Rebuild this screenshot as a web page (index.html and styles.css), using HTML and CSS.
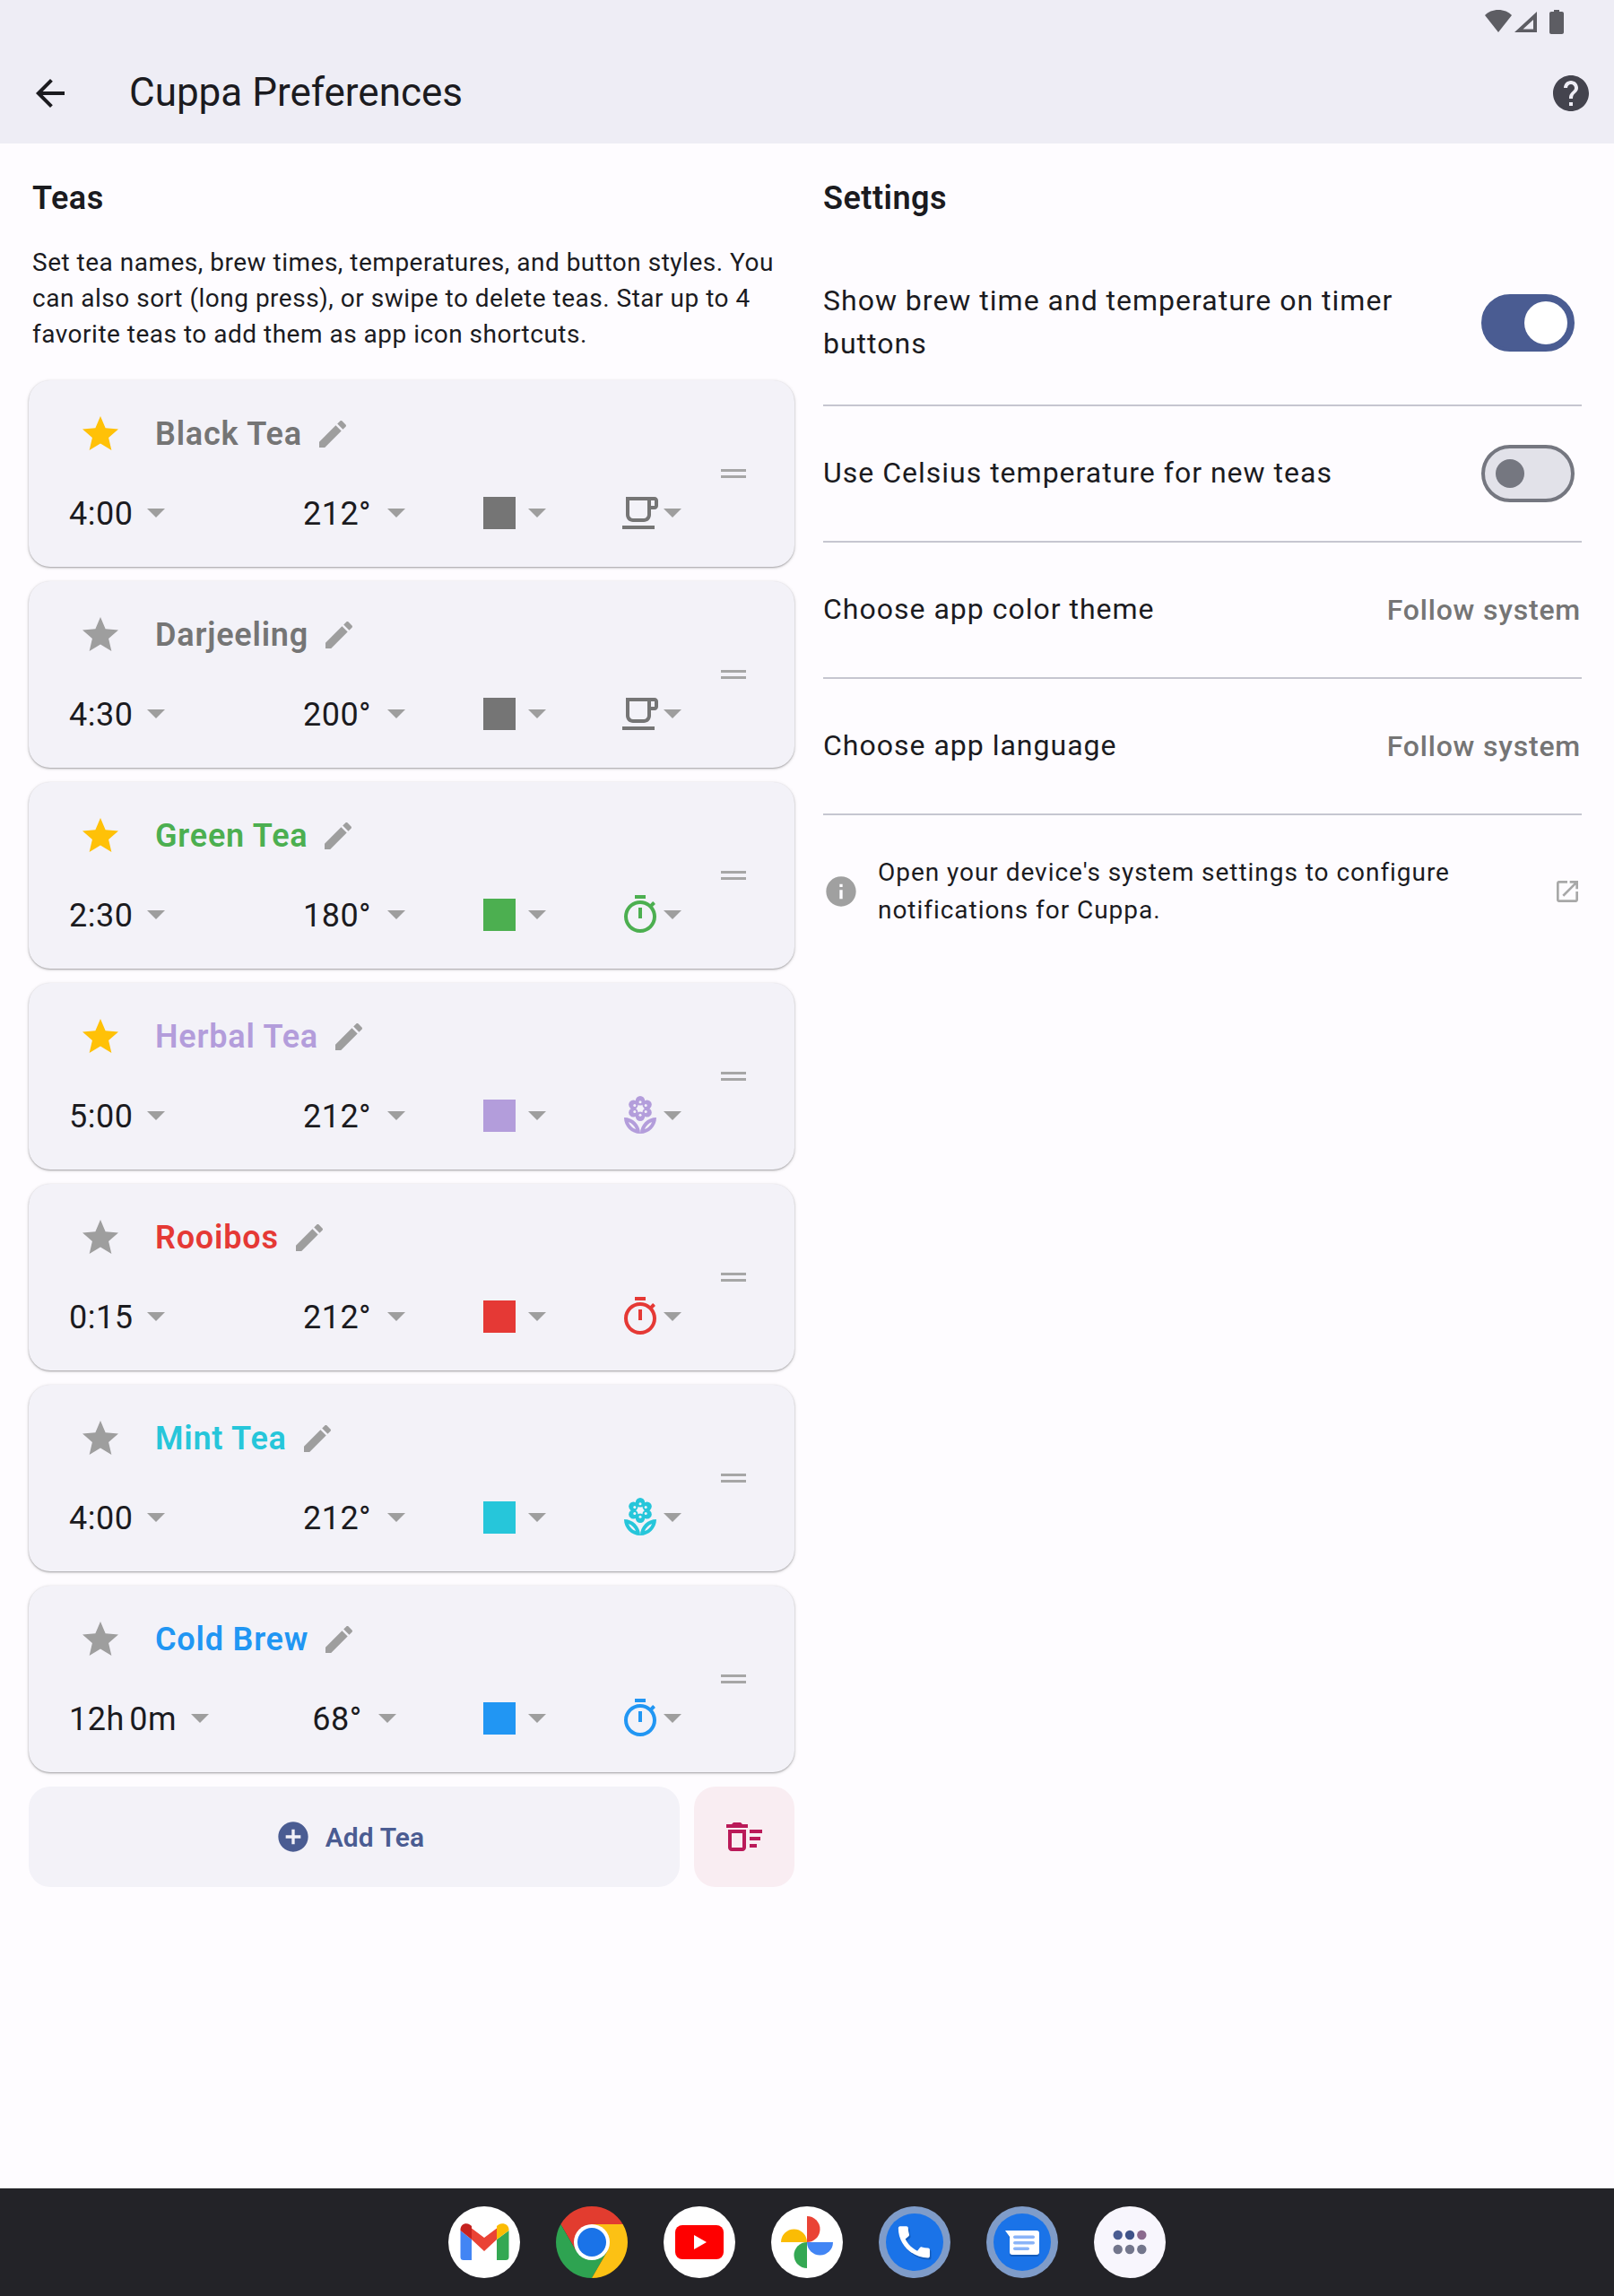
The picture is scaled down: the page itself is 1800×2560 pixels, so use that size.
FILE: index.html
```html
<!DOCTYPE html>
<html lang="en">
<head>
    <meta charset="UTF-8">
    <meta name="viewport" content="width=device-width, initial-scale=1.0">
    <title>Cuppa Preferences</title>
    <link rel="stylesheet" href="styles.css">
</head>
<body>
    <!-- Shared icons -->
    <svg class="icon-defs">
        <symbol id="i-star" viewBox="0 0 24 24"><path d="M12 17.27 18.18 21l-1.64-7.03L22 9.24l-7.19-.61L12 2 9.19 8.63 2 9.24l5.46 4.73L5.82 21z"/></symbol>
        <symbol id="i-edit" viewBox="0 0 24 24"><path d="M3 17.25V21h3.75L17.81 9.94l-3.75-3.75L3 17.25zM20.71 7.04c.39-.39.39-1.02 0-1.41l-2.34-2.34c-.39-.39-1.02-.39-1.41 0l-1.83 1.83 3.75 3.75 1.83-1.83z"/></symbol>
        <symbol id="i-drop" viewBox="0 0 20 10"><path d="M0 0h20L10 10z"/></symbol>
        <symbol id="i-cup" viewBox="0 0 24 24"><path d="M20 3H4v10c0 2.21 1.79 4 4 4h6c2.21 0 4-1.79 4-4v-3h2c1.11 0 2-.89 2-2V5c0-1.11-.89-2-2-2zm-4 10c0 1.1-.9 2-2 2H8c-1.1 0-2-.9-2-2V5h10v8zm4-5h-2V5h2v3zM2 19h18v2H2z"/></symbol>
        <symbol id="i-timer" viewBox="0 0 24 24"><path d="M15 1H9v2h6V1zm-4 13h2V8h-2v6zm8.03-6.61 1.42-1.42c-.43-.51-.9-.99-1.41-1.41l-1.42 1.42C16.07 4.74 14.12 4 12 4c-4.97 0-9 4.03-9 9s4.02 9 9 9 9-4.03 9-9c0-2.12-.74-4.07-1.97-5.61zM12 20c-3.87 0-7-3.13-7-7s3.13-7 7-7 7 3.13 7 7-3.13 7-7 7z"/></symbol>
        <symbol id="i-flower" viewBox="0 0 24 24">
            <path d="M12 22c4.97 0 9-4.03 9-9-4.97 0-9 4.03-9 9zm2.44-2.44c.71-1.9 2.22-3.42 4.12-4.12-.71 1.9-2.22 3.41-4.12 4.12zM3 13c0 4.97 4.03 9 9 9 0-4.97-4.03-9-9-9zm2.44 2.44c1.9.71 3.42 2.22 4.12 4.12-1.9-.71-3.41-2.22-4.12-4.12z"/>
            <circle cx="12" cy="3.6" r="2.6"/><circle cx="12" cy="12.4" r="2.6"/>
            <circle cx="8.2" cy="5.8" r="2.6"/><circle cx="15.8" cy="5.8" r="2.6"/>
            <circle cx="8.2" cy="10.2" r="2.6"/><circle cx="15.8" cy="10.2" r="2.6"/>
            <g fill="#f3f2f8">
                <circle cx="12" cy="4.4" r=".75"/><circle cx="12" cy="11.6" r=".75"/>
                <circle cx="8.9" cy="6.2" r=".75"/><circle cx="15.1" cy="6.2" r=".75"/>
                <circle cx="8.9" cy="9.8" r=".75"/><circle cx="15.1" cy="9.8" r=".75"/>
            </g>
        </symbol>
    </svg>

    <!-- App bar -->
    <header class="appbar">
        <div class="status-bar">
            <svg class="status-wifi" viewBox="0 0 30 25"><path d="M0 6C3.500 2.200 9 0 15 0s11.500 2.200 15 6L15 25z"/></svg>
            <svg class="status-signal" viewBox="0 0 25 23"><path d="M25 0v23H0zM21 9 9.500 19.500H21z" fill-rule="evenodd"/></svg>
            <svg class="status-battery" viewBox="0 0 16 27"><path d="M5 0h6v2h3c1.100 0 2 .9 2 2v21c0 1.100-.9 2-2 2H2c-1.100 0-2-.9-2-2V4c0-1.100.9-2 2-2h3z"/></svg>
        </div>
        <div class="toolbar">
            <svg class="icon-48 back-icon" viewBox="0 0 24 24"><path d="M20 11H7.830l5.590-5.590L12 4l-8 8 8 8 1.410-1.410L7.830 13H20z"/></svg>
            <h1 class="page-title">Cuppa Preferences</h1>
            <svg class="icon-48 help-icon" viewBox="0 0 24 24"><path d="M12 2C6.480 2 2 6.480 2 12s4.480 10 10 10 10-4.480 10-10S17.520 2 12 2zm1 17h-2v-2h2v2zm2.070-7.750-.9.920C13.450 12.900 13 13.500 13 15h-2v-.5c0-1.100.45-2.100 1.170-2.830l1.240-1.260c.37-.36.59-.86.59-1.410 0-1.100-.9-2-2-2s-2 .9-2 2H8c0-2.210 1.790-4 4-4s4 1.790 4 4c0 .88-.36 1.680-.93 2.250z"/></svg>
        </div>
    </header>

    <main class="content">
        <!-- Teas column -->
        <section class="teas">
            <h2 class="section-title">Teas</h2>
            <p class="teas-intro">Set tea names, brew times, temperatures, and button styles. You can also sort (long press), or swipe to delete teas. Star up to 4 favorite teas to add them as app icon shortcuts.</p>

            <div class="tea-list">
                <div class="tea-card tea-grey">
                    <div class="tea-main">
                        <div class="tea-head">
                            <svg class="icon-48 star star-on"><use href="#i-star"/></svg>
                            <span class="tea-name">Black Tea</span>
                            <svg class="edit-icon"><use href="#i-edit"/></svg>
                        </div>
                        <div class="tea-controls">
                            <div class="pick"><span>4:00</span><svg class="drop"><use href="#i-drop"/></svg></div>
                            <div class="pick pick-temp"><span>212°</span><svg class="drop"><use href="#i-drop"/></svg></div>
                            <div class="pick pick-color"><div class="swatch"></div><svg class="drop"><use href="#i-drop"/></svg></div>
                            <div class="pick pick-style"><svg class="icon-48 style-icon"><use href="#i-cup"/></svg><svg class="drop"><use href="#i-drop"/></svg></div>
                        </div>
                    </div>
                    <div class="drag-handle"></div>
                </div>

                <div class="tea-card tea-grey">
                    <div class="tea-main">
                        <div class="tea-head">
                            <svg class="icon-48 star"><use href="#i-star"/></svg>
                            <span class="tea-name">Darjeeling</span>
                            <svg class="edit-icon"><use href="#i-edit"/></svg>
                        </div>
                        <div class="tea-controls">
                            <div class="pick"><span>4:30</span><svg class="drop"><use href="#i-drop"/></svg></div>
                            <div class="pick pick-temp"><span>200°</span><svg class="drop"><use href="#i-drop"/></svg></div>
                            <div class="pick pick-color"><div class="swatch"></div><svg class="drop"><use href="#i-drop"/></svg></div>
                            <div class="pick pick-style"><svg class="icon-48 style-icon"><use href="#i-cup"/></svg><svg class="drop"><use href="#i-drop"/></svg></div>
                        </div>
                    </div>
                    <div class="drag-handle"></div>
                </div>

                <div class="tea-card tea-green">
                    <div class="tea-main">
                        <div class="tea-head">
                            <svg class="icon-48 star star-on"><use href="#i-star"/></svg>
                            <span class="tea-name">Green Tea</span>
                            <svg class="edit-icon"><use href="#i-edit"/></svg>
                        </div>
                        <div class="tea-controls">
                            <div class="pick"><span>2:30</span><svg class="drop"><use href="#i-drop"/></svg></div>
                            <div class="pick pick-temp"><span>180°</span><svg class="drop"><use href="#i-drop"/></svg></div>
                            <div class="pick pick-color"><div class="swatch"></div><svg class="drop"><use href="#i-drop"/></svg></div>
                            <div class="pick pick-style"><svg class="icon-48 style-icon"><use href="#i-timer"/></svg><svg class="drop"><use href="#i-drop"/></svg></div>
                        </div>
                    </div>
                    <div class="drag-handle"></div>
                </div>

                <div class="tea-card tea-purple">
                    <div class="tea-main">
                        <div class="tea-head">
                            <svg class="icon-48 star star-on"><use href="#i-star"/></svg>
                            <span class="tea-name">Herbal Tea</span>
                            <svg class="edit-icon"><use href="#i-edit"/></svg>
                        </div>
                        <div class="tea-controls">
                            <div class="pick"><span>5:00</span><svg class="drop"><use href="#i-drop"/></svg></div>
                            <div class="pick pick-temp"><span>212°</span><svg class="drop"><use href="#i-drop"/></svg></div>
                            <div class="pick pick-color"><div class="swatch"></div><svg class="drop"><use href="#i-drop"/></svg></div>
                            <div class="pick pick-style"><svg class="icon-48 style-icon"><use href="#i-flower"/></svg><svg class="drop"><use href="#i-drop"/></svg></div>
                        </div>
                    </div>
                    <div class="drag-handle"></div>
                </div>

                <div class="tea-card tea-red">
                    <div class="tea-main">
                        <div class="tea-head">
                            <svg class="icon-48 star"><use href="#i-star"/></svg>
                            <span class="tea-name">Rooibos</span>
                            <svg class="edit-icon"><use href="#i-edit"/></svg>
                        </div>
                        <div class="tea-controls">
                            <div class="pick"><span>0:15</span><svg class="drop"><use href="#i-drop"/></svg></div>
                            <div class="pick pick-temp"><span>212°</span><svg class="drop"><use href="#i-drop"/></svg></div>
                            <div class="pick pick-color"><div class="swatch"></div><svg class="drop"><use href="#i-drop"/></svg></div>
                            <div class="pick pick-style"><svg class="icon-48 style-icon"><use href="#i-timer"/></svg><svg class="drop"><use href="#i-drop"/></svg></div>
                        </div>
                    </div>
                    <div class="drag-handle"></div>
                </div>

                <div class="tea-card tea-cyan">
                    <div class="tea-main">
                        <div class="tea-head">
                            <svg class="icon-48 star"><use href="#i-star"/></svg>
                            <span class="tea-name">Mint Tea</span>
                            <svg class="edit-icon"><use href="#i-edit"/></svg>
                        </div>
                        <div class="tea-controls">
                            <div class="pick"><span>4:00</span><svg class="drop"><use href="#i-drop"/></svg></div>
                            <div class="pick pick-temp"><span>212°</span><svg class="drop"><use href="#i-drop"/></svg></div>
                            <div class="pick pick-color"><div class="swatch"></div><svg class="drop"><use href="#i-drop"/></svg></div>
                            <div class="pick pick-style"><svg class="icon-48 style-icon"><use href="#i-flower"/></svg><svg class="drop"><use href="#i-drop"/></svg></div>
                        </div>
                    </div>
                    <div class="drag-handle"></div>
                </div>

                <div class="tea-card tea-blue">
                    <div class="tea-main">
                        <div class="tea-head">
                            <svg class="icon-48 star"><use href="#i-star"/></svg>
                            <span class="tea-name">Cold Brew</span>
                            <svg class="edit-icon"><use href="#i-edit"/></svg>
                        </div>
                        <div class="tea-controls">
                            <div class="pick"><span>12h 0m</span><svg class="drop"><use href="#i-drop"/></svg></div>
                            <div class="pick pick-temp"><span>68°</span><svg class="drop"><use href="#i-drop"/></svg></div>
                            <div class="pick pick-color"><div class="swatch"></div><svg class="drop"><use href="#i-drop"/></svg></div>
                            <div class="pick pick-style"><svg class="icon-48 style-icon"><use href="#i-timer"/></svg><svg class="drop"><use href="#i-drop"/></svg></div>
                        </div>
                    </div>
                    <div class="drag-handle"></div>
                </div>
            </div>

            <div class="tea-actions">
                <div class="add-button">
                    <svg class="add-icon" viewBox="0 0 24 24"><path d="M12 2C6.480 2 2 6.480 2 12s4.480 10 10 10 10-4.480 10-10S17.520 2 12 2zm5 11h-4v4h-2v-4H7v-2h4V7h2v4h4v2z"/></svg>
                    <span>Add Tea</span>
                </div>
                <div class="delete-button">
                    <svg class="icon-48" viewBox="0 0 24 24"><path d="M15 16h4v2h-4zm0-8h7v2h-7zm0 4h6v2h-6zM3 18c0 1.100.9 2 2 2h6c1.100 0 2-.9 2-2V8H3v10zm2-8h6v8H5v-8zm5-6H6L5 5H2v2h12V5h-3z"/></svg>
                </div>
            </div>
        </section>

        <!-- Settings column -->
        <section class="settings">
            <h2 class="section-title">Settings</h2>
            <div class="settings-list">
                <div class="setting-row setting-tall">
                    <span class="setting-label setting-wrap">Show brew time and temperature on timer buttons</span>
                    <div class="toggle toggle-on"><span class="thumb"></span></div>
                </div>
                <div class="setting-row">
                    <span class="setting-label">Use Celsius temperature for new teas</span>
                    <div class="toggle"><span class="thumb"></span></div>
                </div>
                <div class="setting-row setting-choice">
                    <span class="setting-label">Choose app color theme</span>
                    <span class="setting-value">Follow system</span>
                </div>
                <div class="setting-row setting-choice">
                    <span class="setting-label">Choose app language</span>
                    <span class="setting-value">Follow system</span>
                </div>
            </div>
            <div class="notify-row">
                <svg class="info-icon" viewBox="0 0 24 24"><path d="M12 2C6.480 2 2 6.480 2 12s4.480 10 10 10 10-4.480 10-10S17.520 2 12 2zm1 15h-2v-6h2v6zm0-8h-2V7h2v2z"/></svg>
                <p class="notify-text">Open your device's system settings to configure notifications for Cuppa.</p>
                <svg class="open-icon" viewBox="0 0 24 24"><path d="M19 19H5V5h7V3H5c-1.110 0-2 .9-2 2v14c0 1.100.89 2 2 2h14c1.100 0 2-.9 2-2v-7h-2v7zM14 3v2h3.590l-9.830 9.830 1.410 1.410L19 6.410V10h2V3h-7z"/></svg>
            </div>
        </section>
    </main>

    <!-- Launcher dock -->
    <footer class="dock">
        <svg class="dock-app" viewBox="0 0 80 80">
            <circle cx="40" cy="40" r="40" fill="#fff"/>
            <path d="M13.500 27v29.500a3.500 3.500 0 0 0 3.500 3.500h9V37z" fill="#4285f4"/>
            <path d="M54 37v23h10a3.500 3.500 0 0 0 3.500-3.500V27z" fill="#34a853"/>
            <path d="M26 24.500 40 35l14-10.500V37L40 50 26 37z" fill="#ea4335"/>
            <path d="M13.500 27v-1c0-6 6-8.500 10.500-5.500l2 1.500v15z" fill="#c5221f"/>
            <path d="M54 37V22l2-1.500c4.500-3 11.500-.5 11.500 5.500v1z" fill="#fbbc04"/>
        </svg>
        <svg class="dock-app" viewBox="0 0 80 80">
            <path d="M40 20h34.640A40 40 0 0 0 5.360 20L22.680 50z" fill="#e23c2f"/>
            <path d="M5.360 20A40 40 0 0 0 40 80l17.320-30H22.680z" fill="#2ea351"/>
            <path d="M74.640 20H40l17.320 30L40 80A40 40 0 0 0 74.640 20z" fill="#fcc114"/>
            <circle cx="40" cy="40" r="20" fill="#fff"/>
            <circle cx="40" cy="40" r="16" fill="#1a73e8"/>
        </svg>
        <svg class="dock-app" viewBox="0 0 80 80">
            <circle cx="40" cy="40" r="40" fill="#fff"/>
            <rect x="13" y="21" width="54" height="38" rx="8" fill="#f00"/>
            <path d="M34 32l14 8-14 8z" fill="#fff"/>
        </svg>
        <svg class="dock-app" viewBox="0 0 80 80">
            <circle cx="40" cy="40" r="40" fill="#fff"/>
            <path d="M40 11a14.500 14.500 0 0 1 0 29z" fill="#ea4335"/>
            <path d="M11 40a14.500 14.500 0 0 1 29 0z" fill="#fbbc04"/>
            <path d="M40 69a14.500 14.500 0 0 1 0-29z" fill="#34a853"/>
            <path d="M69 40a14.500 14.500 0 0 1-29 0z" fill="#4285f4"/>
        </svg>
        <svg class="dock-app" viewBox="0 0 80 80">
            <circle cx="40" cy="40" r="40" fill="#7f9cc9"/>
            <circle cx="40" cy="40" r="32" fill="#1a73e8"/>
            <path transform="translate(17.500 18.500) scale(1.950)" d="M20.010 15.380c-1.230 0-2.420-.2-3.530-.56-.35-.12-.74-.03-1.010.24l-1.570 1.970c-2.830-1.350-5.480-3.900-6.890-6.830l1.950-1.660c.27-.28.35-.67.24-1.020-.37-1.110-.56-2.300-.56-3.530 0-.54-.45-.99-.99-.99H4.190C3.650 3 3 3.240 3 3.990 3 13.280 10.730 21 20.010 21c.71 0 .99-.63.99-1.180v-3.450c0-.54-.45-.99-.99-.99z" fill="#135cbc"/>
            <path transform="translate(16 16.500) scale(1.950)" d="M20.010 15.380c-1.230 0-2.420-.2-3.530-.56-.35-.12-.74-.03-1.010.24l-1.570 1.970c-2.830-1.350-5.480-3.900-6.890-6.830l1.950-1.660c.27-.28.35-.67.24-1.020-.37-1.110-.56-2.300-.56-3.530 0-.54-.45-.99-.99-.99H4.190C3.650 3 3 3.240 3 3.990 3 13.280 10.730 21 20.010 21c.71 0 .99-.63.99-1.180v-3.450c0-.54-.45-.99-.99-.99z" fill="#fff"/>
        </svg>
        <svg class="dock-app" viewBox="0 0 80 80">
            <circle cx="40" cy="40" r="40" fill="#7f9cc9"/>
            <circle cx="40" cy="40" r="32" fill="#1a73e8"/>
            <path d="M23 29h33a3 3 0 0 1 3 3v21a3 3 0 0 1-3 3H29a3 3 0 0 1-3-3V36z" fill="#135cbc"/>
            <path d="M21 27h35a3 3 0 0 1 3 3v21a3 3 0 0 1-3 3H29a3 3 0 0 1-3-3V34z" fill="#fff"/>
            <g fill="#8ab4f8">
                <rect x="30" y="32.500" width="24" height="3.500" rx="1.700"/>
                <rect x="30" y="39" width="24" height="3.500" rx="1.700"/>
                <rect x="30" y="45.500" width="18" height="3.500" rx="1.700"/>
            </g>
        </svg>
        <svg class="dock-app" viewBox="0 0 80 80">
            <circle cx="40" cy="40" r="40" fill="#f8f6fd"/>
            <circle cx="26.700" cy="32" r="5.200" fill="#4a5c92"/>
            <circle cx="40" cy="32" r="5.200" fill="#3f5389"/>
            <circle cx="53.300" cy="32" r="5.200" fill="#8b6a8e"/>
            <circle cx="26.700" cy="48" r="5.200" fill="#73768c"/>
            <circle cx="40" cy="48" r="5.200" fill="#73768c"/>
            <circle cx="53.300" cy="48" r="5.200" fill="#73768c"/>
        </svg>
    </footer>
</body>
</html>
```

FILE: styles.css
```css
/* Basic Reset */
* {
    box-sizing: border-box;
}

body, h1, h2, p {
    margin: 0;
    padding: 0;
}

body {
    display: flex;
    flex-direction: column;
    min-height: 100vh;
    background-color: #fefcff;
    color: #1b1b1f;
    font-family: Roboto, 'Liberation Sans', sans-serif;
}

svg {
    display: block;
    fill: currentColor;
    flex: none;
}

.icon-defs {
    display: none;
}

.icon-48 {
    width: 48px;
    height: 48px;
}

/* App bar */
.appbar {
    height: 160px;
    background-color: #eeedf5;
}

.status-bar {
    display: flex;
    align-items: center;
    height: 48px;
    padding: 0 56px 0 0;
    justify-content: flex-end;
    color: #5d5d63;
}

.status-wifi {
    width: 30px;
    height: 25px;
    margin-top: -1px;
}

.status-signal {
    width: 25px;
    height: 23px;
    margin-left: 3px;
}

.status-battery {
    width: 16px;
    height: 27px;
    margin-left: 14px;
}

.toolbar {
    display: flex;
    align-items: center;
    height: 112px;
    padding: 0 24px 0 32px;
}

.page-title {
    flex: 1;
    margin-left: 64px;
    margin-top: -2px;
    font-size: 44px;
    font-weight: 400;
    line-height: 56px;
}

.help-icon {
    color: #44444e;
}

/* Two columns */
.content {
    flex: 1;
    display: grid;
    grid-template-columns: 854px 846px;
    column-gap: 32px;
    padding: 37px 36px 0 32px;
}

.section-title {
    font-size: 36px;
    font-weight: 600;
    line-height: 48px;
    letter-spacing: 0.5px;
}

/* Teas */
.teas > .section-title {
    padding-left: 4px;
}

.teas-intro {
    margin: 28px 0 31px;
    padding-left: 4px;
    font-size: 28px;
    line-height: 40px;
    letter-spacing: 0.5px;
}

.tea-list {
    display: flex;
    flex-direction: column;
    gap: 16px;
}

.tea-card {
    display: flex;
    align-items: center;
    height: 208px;
    background-color: #f3f2f8;
    border-radius: 24px;
    box-shadow: 0 1px 2px rgba(0, 0, 0, 0.3), 0 1px 4px rgba(0, 0, 0, 0.12);
}

.tea-grey { --tea: #757575; }
.tea-green { --tea: #4caf50; }
.tea-purple { --tea: #b39ddb; }
.tea-red { --tea: #e53935; }
.tea-cyan { --tea: #26c6da; }
.tea-blue { --tea: #2196f3; }

.tea-main {
    flex: 1;
}

.tea-head {
    display: flex;
    align-items: center;
    height: 48px;
    padding-left: 56px;
}

.star {
    margin-right: 37px;
    color: #9e9e9e;
}

.star-on {
    color: #ffc107;
}

.tea-name {
    color: var(--tea);
    font-size: 36px;
    font-weight: 600;
    letter-spacing: 0.8px;
}

.edit-icon {
    width: 40px;
    height: 40px;
    margin-left: 14px;
    color: #9e9e9e;
}

.tea-controls {
    display: grid;
    grid-template-columns: 238px 160px 215px auto;
    margin-top: 40px;
    padding-left: 45px;
    height: 48px;
}

.pick {
    display: flex;
    align-items: center;
    gap: 16px;
    font-size: 36px;
    letter-spacing: 0.5px;
    word-spacing: -4px;
}

.pick span {
    padding-top: 1px;
}

.drop {
    width: 20px;
    height: 10px;
    color: #9e9e9e;
}

.pick-temp {
    justify-content: center;
    gap: 18px;
}

.pick-color {
    margin-left: 64px;
    gap: 14px;
}

.swatch {
    width: 36px;
    height: 36px;
    background-color: var(--tea);
}

.pick-style {
    gap: 2px;
}

.style-icon {
    color: var(--tea);
}

.drag-handle {
    width: 28px;
    height: 10px;
    margin-right: 54px;
    border-top: 3px solid #a6a6a6;
    border-bottom: 3px solid #a6a6a6;
}

.tea-actions {
    display: flex;
    gap: 16px;
    margin-top: 16px;
}

.add-button {
    flex: 1;
    display: flex;
    align-items: center;
    justify-content: center;
    gap: 16px;
    height: 112px;
    padding-right: 10px;
    background-color: #f3f2f8;
    border-radius: 24px;
    color: #4a5c92;
    font-size: 30px;
    font-weight: 600;
    letter-spacing: 0.1px;
}

.add-icon {
    width: 40px;
    height: 40px;
}

.delete-button {
    display: flex;
    align-items: center;
    justify-content: center;
    width: 112px;
    height: 112px;
    background-color: #f9edf2;
    border-radius: 24px;
    color: #ba1a59;
}

/* Settings */
.settings-list {
    margin-top: 24px;
}

.setting-row {
    display: flex;
    align-items: center;
    justify-content: space-between;
    height: 152px;
    padding-right: 8px;
    border-bottom: 2px solid #c6c6d0;
    font-size: 32px;
    line-height: 48px;
    letter-spacing: 1px;
}

.setting-tall {
    height: 184px;
}

.setting-label {
    padding-bottom: 3px;
}

.setting-wrap {
    max-width: 680px;
}

.setting-choice {
    padding-right: 1px;
}

.setting-value {
    color: #757575;
    font-weight: 500;
    letter-spacing: 0.8px;
}

.toggle {
    display: flex;
    align-items: center;
    width: 104px;
    height: 64px;
    padding-left: 12px;
    background-color: #e2e2e9;
    border: 4px solid #757780;
    border-radius: 32px;
}

.thumb {
    width: 32px;
    height: 32px;
    background-color: #757780;
    border-radius: 50%;
}

.toggle-on {
    justify-content: flex-end;
    padding: 0 4px 0 0;
    background-color: #4a5c92;
    border-color: #4a5c92;
}

.toggle-on .thumb {
    width: 48px;
    height: 48px;
    background-color: #fff;
}

.notify-row {
    display: flex;
    align-items: center;
    padding-top: 43px;
}

.info-icon {
    width: 40px;
    height: 40px;
    color: #a0a0a0;
}

.notify-text {
    flex: 1;
    margin-left: 21px;
    max-width: 720px;
    font-size: 28px;
    line-height: 42px;
    letter-spacing: 0.96px;
}

.open-icon {
    width: 32px;
    height: 32px;
    margin-left: auto;
    color: #a8a8a8;
}

/* Launcher dock */
.dock {
    display: flex;
    align-items: center;
    justify-content: center;
    gap: 40px;
    height: 120px;
    background-color: #232328;
}

.dock-app {
    width: 80px;
    height: 80px;
}
```
